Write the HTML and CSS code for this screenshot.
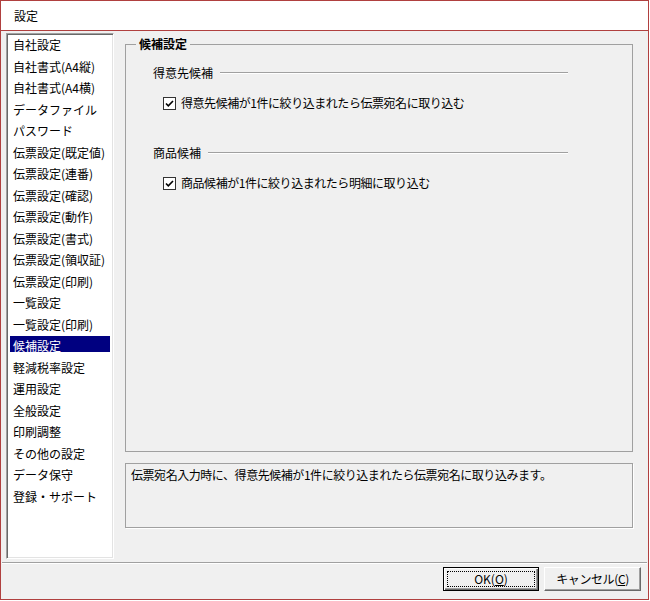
FILE: index.html
```html
<!DOCTYPE html>
<html lang="ja">
<head>
<meta charset="utf-8">
<title>設定</title>
<link rel="stylesheet" href="styles.css">
</head>
<body>
<div class="window">
  <div class="titlebar">設定</div>
  <div class="client">
    <div class="main">
      <ul class="list">
        <li>自社設定</li>
        <li>自社書式(A4縦)</li>
        <li>自社書式(A4横)</li>
        <li>データファイル</li>
        <li>パスワード</li>
        <li>伝票設定(既定値)</li>
        <li>伝票設定(連番)</li>
        <li>伝票設定(確認)</li>
        <li>伝票設定(動作)</li>
        <li>伝票設定(書式)</li>
        <li>伝票設定(領収証)</li>
        <li>伝票設定(印刷)</li>
        <li>一覧設定</li>
        <li>一覧設定(印刷)</li>
        <li class="sel">候補設定</li>
        <li>軽減税率設定</li>
        <li>運用設定</li>
        <li>全般設定</li>
        <li>印刷調整</li>
        <li>その他の設定</li>
        <li>データ保守</li>
        <li>登録・サポート</li>
      </ul>
      <div class="right">
        <fieldset class="group">
          <legend>候補設定</legend>
          <div class="sub sub-first"><span>得意先候補</span><i class="rule"></i></div>
          <div class="check check-first">
            <svg class="box" width="13" height="13" viewBox="0 0 13 13"><rect x="0.5" y="0.5" width="12" height="12" fill="#fff" stroke="#333"/><path d="M3 6.5 L5.3 8.8 L10 4" fill="none" stroke="#000" stroke-width="1.6"/></svg>
            <span class="ctext">得意先候補が1件に絞り込まれたら伝票宛名に取り込む</span>
          </div>
          <div class="sub sub-second"><span>商品候補</span><i class="rule"></i></div>
          <div class="check check-second">
            <svg class="box" width="13" height="13" viewBox="0 0 13 13"><rect x="0.5" y="0.5" width="12" height="12" fill="#fff" stroke="#333"/><path d="M3 6.5 L5.3 8.8 L10 4" fill="none" stroke="#000" stroke-width="1.6"/></svg>
            <span class="ctext">商品候補が1件に絞り込まれたら明細に取り込む</span>
          </div>
        </fieldset>
        <div class="desc">伝票宛名入力時に、得意先候補が1件に絞り込まれたら伝票宛名に取り込みます。</div>
      </div>
    </div>
    <div class="sep"></div>
    <div class="buttons">
      <button class="btn default"><span class="focus">OK(<u>O</u>)</span></button>
      <button class="btn cancel"><span class="label">キャンセル(<u>C</u>)</span></button>
    </div>
  </div>
</div>
</body>
</html>
```
FILE: styles.css
```css
* { box-sizing: border-box; }
html, body { margin: 0; padding: 0; background: #fff; }
body {
  font-family: "Noto Sans CJK JP", "Noto Sans", sans-serif;
  font-size: 12px;
  color: #000;
}
.window {
  width: 649px;
  height: 600px;
  border: 1px solid #b0403f;
  display: flex;
  flex-direction: column;
  background: #f0f0f0;
}
.titlebar {
  flex: none;
  height: 30px;
  background: #fff;
  border-bottom: 1px solid #b0403f;
  padding-left: 13px;
  line-height: 29px;
}
.client {
  flex: 1;
  display: flex;
  flex-direction: column;
}
.main {
  display: flex;
  padding: 2px 0 0 5px;
}
.list {
  flex: none;
  width: 108px;
  height: 526px;
  margin: 0;
  padding: 1px 3px 0 3px;
  list-style: none;
  background: #fff;
  border: 1px solid;
  border-color: #a0a0a0 #fff #fff #a0a0a0;
  box-shadow: inset 1px 1px 0 #696969, inset -1px -1px 0 #e3e3e3;
  display: flex;
  flex-direction: column;
  gap: 5.5px;
}
.list li {
  height: 16px;
  line-height: 16px;
  padding: 2px 0 0 3px;
  white-space: nowrap;
}
.list li.sel {
  background: #000080;
  color: #fff;
}
.right {
  width: 508px;
  margin: 3px 0 0 11px;
  display: flex;
  flex-direction: column;
}
.group {
  margin: 0;
  padding: 0;
  height: 416px;
  border: 1px solid #a0a0a0;
  min-width: 0;
}
.group legend {
  margin-left: 10px;
  padding: 0 3px;
  font-weight: bold;
  line-height: 16px;
}
.sub {
  display: flex;
  align-items: center;
  width: 415px;
  margin-left: 27px;
  line-height: 16px;
}
.sub-first { margin-top: 13px; }
.sub-second { margin-top: 34px; }
.rule {
  flex: 1;
  height: 2px;
  margin-left: 7px;
  border-top: 1px solid #a0a0a0;
  border-bottom: 1px solid #fff;
}
.check {
  display: flex;
  align-items: center;
  margin-left: 37px;
  line-height: 16px;
}
.check-first { margin-top: 14px; }
.check-second { margin-top: 14px; }
.check .box {
  flex: none;
  margin-right: 5px;
}
.ctext { letter-spacing: -0.45px; }
.desc {
  margin-top: 11px;
  height: 65px;
  border: 1px solid #a0a0a0;
  box-shadow: 1px 1px 0 #fff;
  padding: 3px 5px 2px 5px;
  line-height: 16px;
  letter-spacing: -0.45px;
}
.sep {
  margin: 3px 1px 0 1px;
  height: 2px;
  border-top: 1px solid #a0a0a0;
  border-bottom: 1px solid #fff;
}
.buttons {
  display: flex;
  justify-content: flex-end;
  gap: 5px;
  padding-right: 7px;
  margin-top: 3px;
}
.btn {
  font: inherit;
  color: #000;
  height: 24px;
  margin: 0;
  padding: 0;
  background: #f0f0f0;
  display: flex;
  align-items: stretch;
}
.btn.default {
  width: 96px;
  border: 1px solid #000;
  box-shadow: inset 1px 1px 0 #fff, inset -1px -1px 0 #696969, inset -2px -2px 0 #a0a0a0;
  padding: 3px;
}
.btn.cancel {
  width: 97px;
  border: 1px solid;
  border-color: #fff #696969 #696969 #fff;
  box-shadow: inset -1px -1px 0 #a0a0a0;
  padding: 2px;
}
.btn .focus, .btn .label {
  flex: 1;
  display: flex;
  align-items: center;
  justify-content: center;
  line-height: 14px;
}
.btn .label { letter-spacing: -0.4px; }
.btn .focus {
  border: 1px dotted #000;
}
.btn u { text-underline-offset: 1px; }
```
